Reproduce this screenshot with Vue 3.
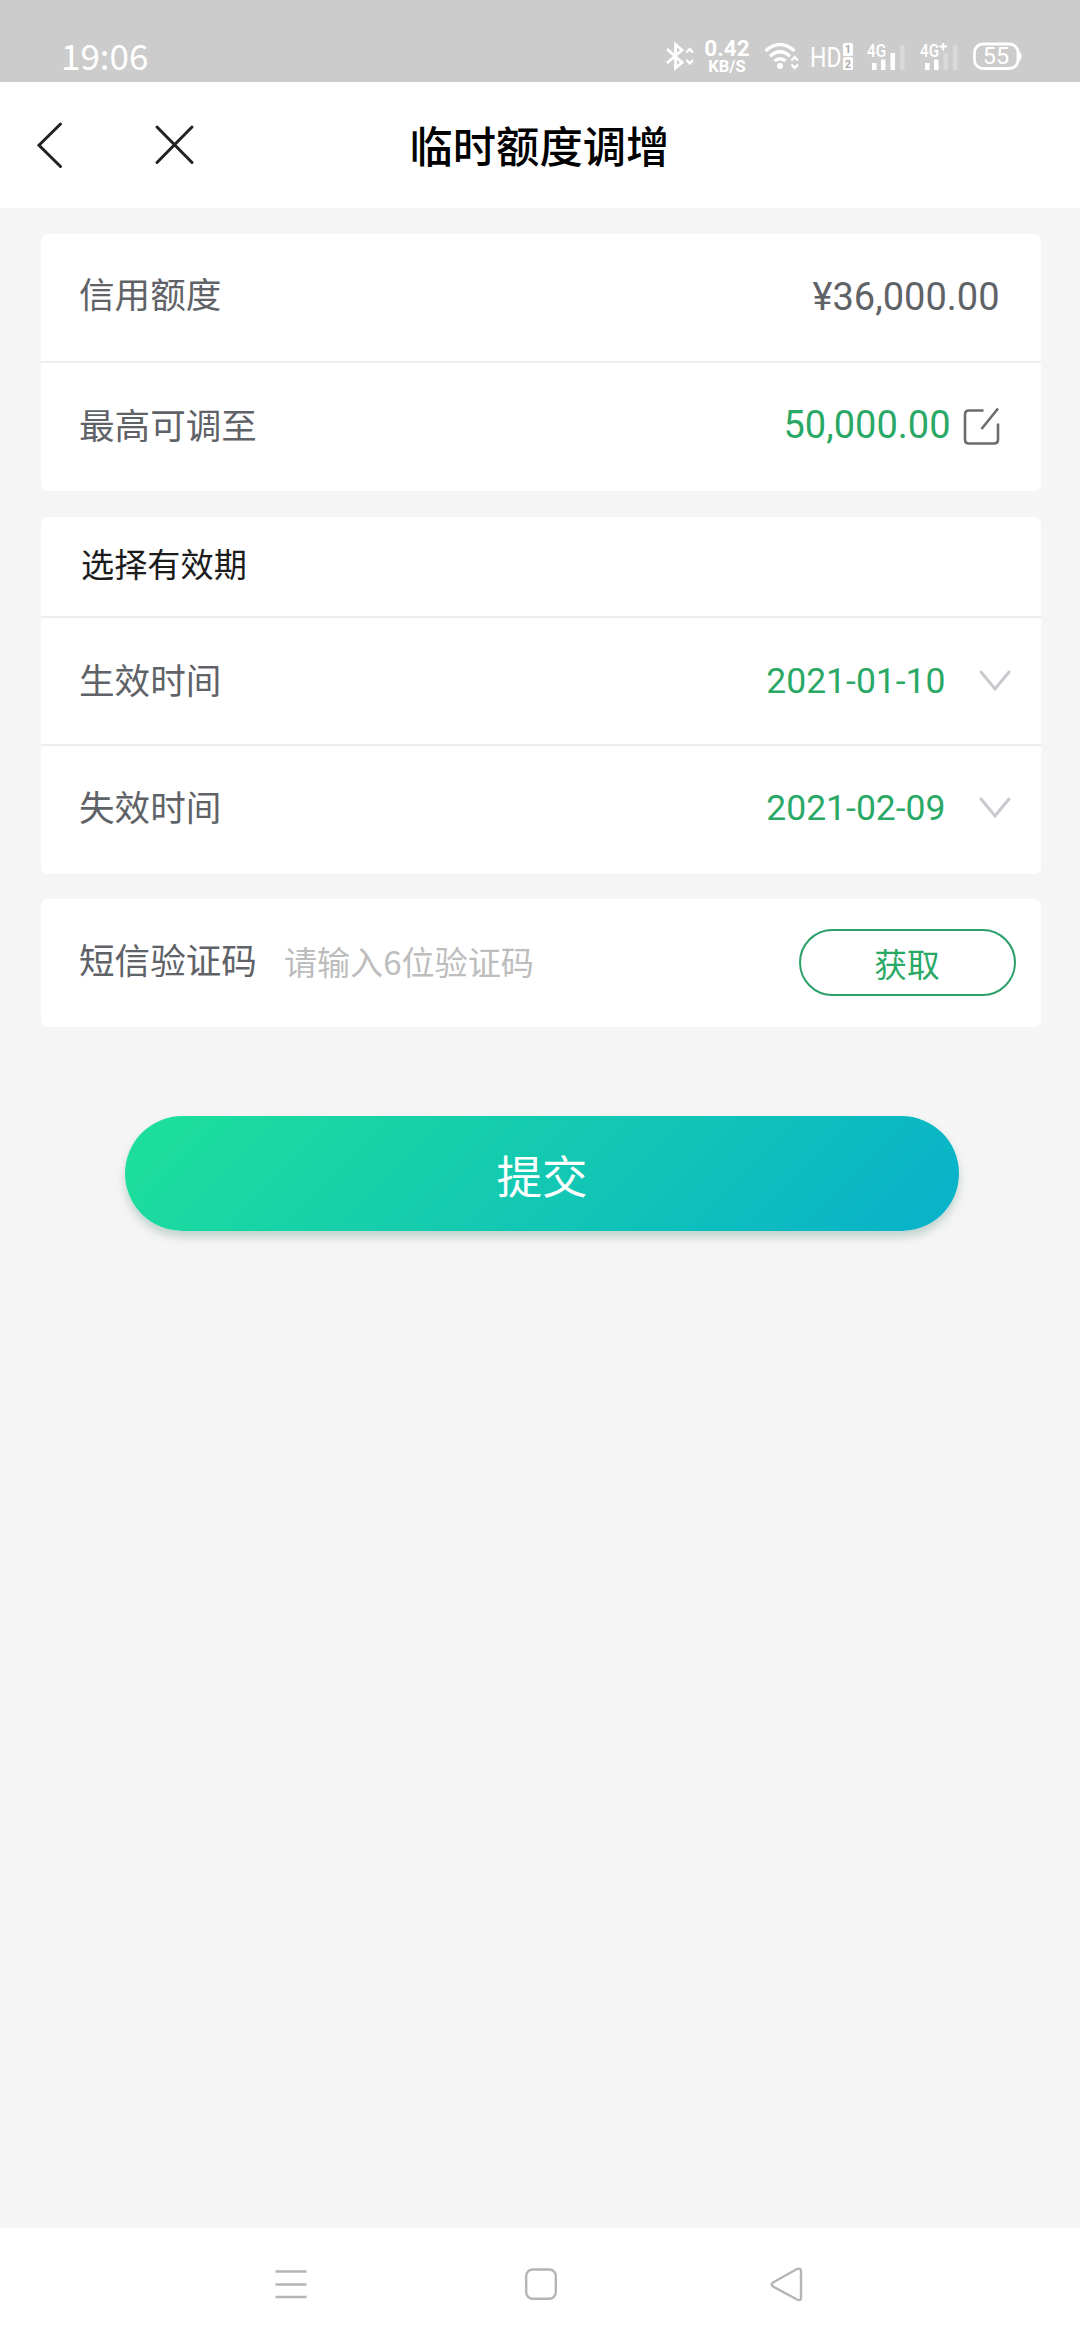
<script setup>
const limits = [
  { label: '信用额度', value: '¥36,000.00', editable: false },
  { label: '最高可调至', value: '50,000.00', editable: true },
]
const dates = [
  { label: '生效时间', value: '2021-01-10' },
  { label: '失效时间', value: '2021-02-09' },
]
</script>

<template>
  <div class="screen">
    <div class="status">
      <span class="clock">19:06</span>
      <div class="indicators">
        <svg class="bt" width="30" height="30" viewBox="0 0 30 30">
          <path d="M2 8 L17 21.5 L10.5 27 V3.5 L17 9 L2 22" fill="none" stroke="#fff" stroke-width="2.8" />
          <path d="M21.5 11.5 L24.7 8 L27.9 11.5 M21.5 19 L24.7 22.5 L27.9 19" fill="none" stroke="#fff" stroke-width="2.4" />
        </svg>
        <div class="speed"><span class="rate">0.42</span><span class="unit">KB/S</span></div>
        <svg class="wifi" width="36" height="30" viewBox="0 0 36 30">
          <g fill="none" stroke="#fff" stroke-width="3.4">
            <path d="M1.5 10 Q16 -3 30.5 10" />
            <path d="M6 15.2 Q16 6.5 26 15.2" />
            <path d="M10.5 20 Q16 15.4 21.5 20" />
          </g>
          <circle cx="16" cy="25" r="3" fill="#fff" />
          <path d="M27.5 19.5 L30.7 16 L33.9 19.5 M27.5 23.5 L30.7 27 L33.9 23.5" fill="none" stroke="#fff" stroke-width="2.4" />
        </svg>
        <svg class="hd" width="44" height="30" viewBox="0 0 44 30">
          <text x="-1" y="25.5" font-size="28" textLength="31.5" lengthAdjust="spacingAndGlyphs">HD</text>
          <rect x="32" y="2" width="10" height="13" rx="1.5" fill="#fff" />
          <rect x="32" y="16" width="10" height="13" rx="1.5" fill="#fff" />
          <text class="sim" x="37" y="12.4" font-size="11" text-anchor="middle">1</text>
          <text class="sim" x="37" y="26.6" font-size="11" text-anchor="middle">2</text>
        </svg>
        <svg class="sig" width="42" height="30" viewBox="0 0 42 30">
          <text x="0" y="15.5" font-size="18" font-weight="500" textLength="19" lengthAdjust="spacingAndGlyphs">4G</text>
          <g fill="#fff">
            <rect x="5" y="22" width="4.5" height="7" />
            <rect x="14" y="18.5" width="4.5" height="10.5" />
            <rect x="23.5" y="12" width="4.5" height="17" />
            <rect x="33" y="4" width="4.5" height="25" opacity=".25" />
          </g>
        </svg>
        <svg class="sig two" width="42" height="30" viewBox="0 0 42 30">
          <text x="0" y="15.5" font-size="18" font-weight="500" textLength="19" lengthAdjust="spacingAndGlyphs">4G</text>
          <path d="M19.5 5.5 H27 M23.2 2 V9.5" stroke="#fff" stroke-width="2" />
          <g fill="#fff">
            <rect x="5" y="22" width="4.5" height="7" />
            <rect x="14" y="18.5" width="4.5" height="10.5" />
            <rect x="23.5" y="12" width="4.5" height="17" opacity=".25" />
            <rect x="33" y="4" width="4.5" height="25" opacity=".25" />
          </g>
        </svg>
        <svg class="bat" width="50" height="30" viewBox="0 0 50 30">
          <rect x="1.5" y="3" width="43.5" height="24.5" rx="8.5" fill="none" stroke="#fff" stroke-width="2.8" />
          <path d="M46 10.5 Q48.5 11.5 48.5 15 Q48.5 19 46 20.5 Z" fill="#fff" />
          <text x="23" y="23.3" font-size="23.5" text-anchor="middle">55</text>
        </svg>
      </div>
    </div>

    <header class="bar">
      <svg class="back" width="30" height="50" viewBox="0 0 30 50">
        <path d="M25.5 4 L4 25.2 L25.5 46.5" />
      </svg>
      <svg class="close" width="40" height="40" viewBox="0 0 40 40">
        <path d="M2 2 L37 37.5 M37 2 L2 37.5" />
      </svg>
      <h1>临时额度调增</h1>
    </header>

    <main>
      <section class="card limits">
        <div v-for="row in limits" :key="row.label" class="row" :class="{ editable: row.editable }">
          <span class="label">{{ row.label }}</span>
          <span class="amount">{{ row.value }}</span>
          <svg v-if="row.editable" class="edit" width="38" height="40" viewBox="0 0 38 40">
            <path d="M21.5 4.5 H7 Q3 4.5 3 8.5 V33.5 Q3 37.5 7 37.5 H32 Q36 37.5 36 33.5 V17.5 M36 2.5 L19.5 23" />
          </svg>
        </div>
      </section>

      <section class="card">
        <div class="row head"><span>选择有效期</span></div>
        <div v-for="row in dates" :key="row.label" class="row date">
          <span class="label">{{ row.label }}</span>
          <span class="day">{{ row.value }}</span>
          <svg class="chev" width="32" height="22" viewBox="0 0 32 22">
            <path d="M2 2 L16 19 L30 2" />
          </svg>
        </div>
      </section>

      <section class="card">
        <div class="row code">
          <span class="label">短信验证码</span>
          <span class="hint">请输入6位验证码</span>
          <button class="get">获取</button>
        </div>
      </section>

      <button class="submit">提交</button>
    </main>

    <nav class="nav">
      <svg width="34" height="36" viewBox="0 0 34 36">
        <path d="M1.5 4.5 H32.5 M1.5 17.5 H32.5 M1.5 30 H32.5" />
      </svg>
      <svg width="34" height="36" viewBox="0 0 34 36">
        <rect x="2.2" y="2.5" width="29.6" height="29.2" rx="6.5" />
      </svg>
      <svg width="34" height="36" viewBox="3.5 0 34 36">
        <path d="M27.5 2 Q31.5 0.5 31.5 4.5 V30.5 Q31.5 34.5 27.5 32.5 L3.5 19.5 Q0.8 17.5 3.5 15.5 Z" />
      </svg>
    </nav>
  </div>
</template>

<style>
body {
  margin: 0;
  background: #f5f5f5;
}
</style>

<style scoped>
.screen {
  width: 1080px;
  height: 2340px;
  display: flex;
  flex-direction: column;
  background: #f5f5f5;
  font-family: Roboto, "Noto Sans CJK SC", sans-serif;
  overflow: hidden;
}
svg {
  overflow: visible;
  flex: none;
}
.status {
  height: 82px;
  box-sizing: border-box;
  padding: 41px 57px 0 61px;
  background: #ccc;
  color: #fff;
  display: flex;
  justify-content: space-between;
  align-items: flex-start;
}
.clock {
  font-family: "Noto Sans CJK SC", sans-serif;
  font-size: 35px;
  line-height: 31px;
  margin-top: -2px;
}
.indicators {
  display: flex;
  height: 30px;
}
.indicators text {
  font-family: Roboto, sans-serif;
  fill: #fff;
}
.indicators .sim {
  fill: #aaa;
  font-weight: 700;
}
.speed {
  width: 46px;
  margin-left: 9px;
  display: flex;
  flex-direction: column;
  align-items: center;
  font-weight: 700;
}
.rate {
  font-size: 22.5px;
  line-height: 17px;
  margin-top: -1px;
}
.unit {
  font-size: 16.5px;
  line-height: 19px;
}
.wifi {
  margin-left: 14px;
}
.hd {
  margin-left: 11px;
}
.sig {
  margin-left: 12px;
}
.sig.two {
  margin-left: 11px;
}
.bat {
  margin-left: 11px;
}
.bar {
  height: 126px;
  background: #fff;
  display: flex;
  align-items: center;
  padding-left: 35px;
}
.bar svg path {
  fill: none;
  stroke: #222;
  stroke-width: 3;
  stroke-linecap: round;
}
.close {
  margin-left: 90px;
}
.bar h1 {
  margin: 7px 0 0 214.5px;
  font-size: 43.3px;
  line-height: 60px;
  font-weight: 500;
  color: #000;
  white-space: nowrap;
}
main {
  flex: 1;
  padding: 25.5px 39.5px 0 41px;
  display: flex;
  flex-direction: column;
}
.card {
  background: #fff;
  border-radius: 7px;
  margin-bottom: 25.5px;
}
.row {
  height: 127.5px;
  padding: 0 41px 0 38px;
  display: flex;
  align-items: center;
}
.row + .row {
  border-top: 2px solid #ebeeee;
}
.label {
  font-size: 35.6px;
  line-height: 50px;
  color: #5f6368;
  margin-right: auto;
}
.limits .label {
  margin-top: -2px;
}
.amount {
  font-size: 38px;
  line-height: 50px;
  color: #5f6368;
}
.editable {
  height: 128px;
}
.editable .label {
  margin-top: 0;
}
.editable .amount {
  color: #2aa866;
  margin-top: -5px;
}
.day {
  color: #2aa866;
  font-size: 35.5px;
}
.edit {
  margin: -3px 0 0 11px;
}
.edit path {
  fill: none;
  stroke: #6c6c6e;
  stroke-width: 2.6;
}
.row.head {
  height: 98.5px;
  padding-bottom: 1px;
  font-size: 33.2px;
  line-height: 48px;
  color: #1c1c1c;
  padding-left: 40px;
}
.row.date {
  height: 126px;
  padding-right: 30px;
}
.row.date:last-child {
  height: 124.5px;
  padding-bottom: 3px;
}
.date .label {
  margin-top: 2px;
}
.chev {
  margin-left: 33px;
}
.chev path {
  fill: none;
  stroke: #c8c8ce;
  stroke-width: 3;
  stroke-linecap: round;
}
.row.code {
  padding-right: 25px;
}
.code .label {
  margin-right: 27px;
  margin-top: -1px;
}
.hint {
  font-family: "Noto Sans CJK SC", sans-serif;
  font-size: 33.1px;
  line-height: 48px;
  color: #bdbdbd;
  margin-top: -4px;
}
button {
  font-family: inherit;
  padding: 0;
  cursor: pointer;
}
.get {
  margin-left: auto;
  box-sizing: border-box;
  width: 217px;
  height: 67px;
  border: 2px solid #2aa068;
  border-radius: 34px;
  background: #fff;
  color: #2aa866;
  font-size: 32.7px;
}
.submit {
  margin: 63.5px 0 0 84px;
  padding-top: 1px;
  width: 834px;
  height: 115px;
  border: 0;
  border-radius: 58px;
  color: #fff;
  font-size: 45.5px;
  background: linear-gradient(135deg, #1ee099, #08b1cb);
  box-shadow: 0 6px 9px rgba(40, 110, 90, .25);
}
.nav {
  height: 112px;
  box-sizing: border-box;
  background: #fff;
  display: flex;
  align-items: center;
  justify-content: space-between;
  padding: 1px 273px 0 274px;
}
.nav svg * {
  fill: none;
  stroke: #b5b5b5;
  stroke-width: 2.4;
}
</style>
